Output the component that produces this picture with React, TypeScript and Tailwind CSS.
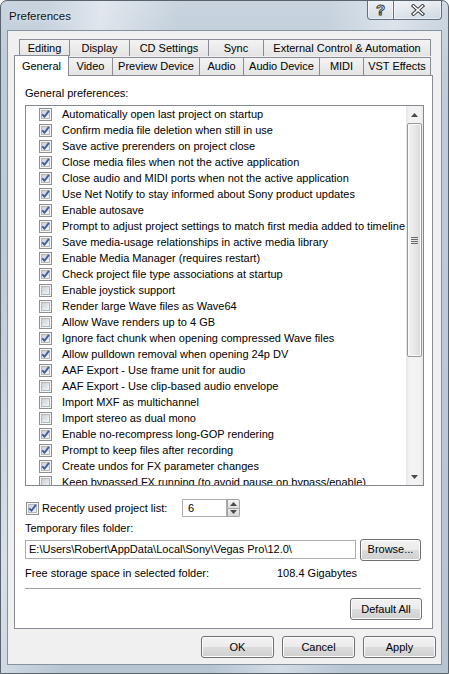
import React from "react";

const items: [string, boolean][] = [
  ["Automatically open last project on startup", true],
  ["Confirm media file deletion when still in use", true],
  ["Save active prerenders on project close", true],
  ["Close media files when not the active application", true],
  ["Close audio and MIDI ports when not the active application", true],
  ["Use Net Notify to stay informed about Sony product updates", true],
  ["Enable autosave", true],
  ["Prompt to adjust project settings to match first media added to timeline", true],
  ["Save media-usage relationships in active media library", true],
  ["Enable Media Manager (requires restart)", true],
  ["Check project file type associations at startup", true],
  ["Enable joystick support", false],
  ["Render large Wave files as Wave64", false],
  ["Allow Wave renders up to 4 GB", false],
  ["Ignore fact chunk when opening compressed Wave files", true],
  ["Allow pulldown removal when opening 24p DV", true],
  ["AAF Export - Use frame unit for audio", true],
  ["AAF Export - Use clip-based audio envelope", false],
  ["Import MXF as multichannel", false],
  ["Import stereo as dual mono", false],
  ["Enable no-recompress long-GOP rendering", true],
  ["Prompt to keep files after recording", true],
  ["Create undos for FX parameter changes", true],
  ["Keep bypassed FX running (to avoid pause on bypass/enable)", false],
];

const backTabs: [string, string][] = [
  ["Editing", "w-[51px] border-l"],
  ["Display", "w-[60px]"],
  ["CD Settings", "w-[79px]"],
  ["Sync", "w-[55px]"],
  ["External Control & Automation", "w-[167px]"],
];

const frontTabs: [string, string][] = [
  ["Video", "w-[44px]"],
  ["Preview Device", "w-[87px]"],
  ["Audio", "w-[44px]"],
  ["Audio Device", "w-[76px]"],
  ["MIDI", "w-[44px]"],
  ["VST Effects", "w-[67px]"],
];

function CheckBox({ checked }: { checked: boolean }) {
  return (
    <svg width="13" height="13" viewBox="0 0 13 13" className="shrink-0">
      <defs>
        <linearGradient id="cbfill" x1="0" y1="0" x2="1" y2="1">
          <stop offset="0" stopColor="#c9ced6" />
          <stop offset="1" stopColor="#f5f6f7" />
        </linearGradient>
      </defs>
      <rect x="0.5" y="0.5" width="12" height="12" fill="#f6f6f6" stroke="#8e8f8f" />
      <rect x="2.5" y="2.5" width="8" height="8" fill="url(#cbfill)" stroke="#b4b8be" />
      {checked && (
        <path d="M3.2 6.3 L5.5 8.7 L9.9 2.9" fill="none" stroke="#3b5a9e" strokeWidth="1.8" />
      )}
    </svg>
  );
}

function Arrow({ up }: { up: boolean }) {
  return (
    <svg width="7" height="4" viewBox="0 0 7 4">
      <path d={up ? "M0 4 L3.5 0 L7 4 Z" : "M0 0 L7 0 L3.5 4 Z"} fill="#4a4a4a" />
    </svg>
  );
}

function Button({ label, w }: { label: string; w: string }) {
  return (
    <div
      className={`${w} h-[22px] flex items-center justify-center rounded-[3px] border border-[#707070] bg-[linear-gradient(to_bottom,#f2f2f2_0%,#ebebeb_50%,#dddddd_50%,#cfcfcf_100%)] shadow-[inset_0_0_0_1px_#fcfcfc] text-black`}
    >
      {label}
    </div>
  );
}

export default function App() {
  return (
    <div className="w-[449px] h-[674px] flex flex-col rounded-t-[7px] border border-[#59636e] bg-[linear-gradient(100deg,transparent_8%,rgba(255,255,255,0.45)_18%,transparent_32%,transparent_58%,rgba(255,255,255,0.4)_70%,transparent_82%),linear-gradient(to_bottom,#c9d4df,#bfccd9_60px,#b7c5d3)] px-[6px] pb-[8px] font-['Liberation_Sans',Arial,sans-serif] text-[11px] text-black overflow-hidden">
      {/* title bar */}
      <div className="h-[29px] flex items-start">
        <div className="pl-[2px] pt-[7px] text-[11.5px] text-[#111] [text-shadow:0_0_6px_rgba(255,255,255,0.9)]">
          Preferences
        </div>
        <div className="ml-auto -mt-px mr-0 flex h-[20px]">
          <div className="w-[27px] h-full flex items-center justify-center rounded-bl-[4px] border border-t-0 border-[#61707f] bg-[linear-gradient(to_bottom,rgba(255,255,255,0.6),rgba(255,255,255,0.25)_50%,rgba(210,220,230,0.35))] shadow-[inset_0_0_0_1px_rgba(255,255,255,0.5)]">
            <span className="text-[15px] font-bold leading-none text-white [-webkit-text-stroke:1px_#3d3d3d]">?</span>
          </div>
          <div className="w-[48px] h-full flex items-center justify-center rounded-br-[4px] border border-t-0 border-l-0 border-[#61707f] bg-[linear-gradient(to_bottom,rgba(255,255,255,0.6),rgba(255,255,255,0.25)_50%,rgba(210,220,230,0.35))] shadow-[inset_0_0_0_1px_rgba(255,255,255,0.5)]">
            <svg width="14" height="12" viewBox="0 0 14 12">
              <path d="M2.5 2 L11.5 10 M11.5 2 L2.5 10" stroke="#3d3d3d" strokeWidth="3.6" strokeLinecap="square" />
              <path d="M2.5 2 L11.5 10 M11.5 2 L2.5 10" stroke="#ffffff" strokeWidth="1.6" strokeLinecap="square" />
            </svg>
          </div>
        </div>
      </div>

      {/* client area */}
      <div className="flex-1 flex flex-col border border-[#8592a0] bg-[#f0f0f0] pt-[8px] pb-[6px]">
        {/* back tab row */}
        <div className="ml-[11px] flex h-[17px]">
          {backTabs.map(([label, cls]) => (
            <div
              key={label}
              className={`${cls} h-full flex items-center justify-center border-t border-r border-[#898c95] bg-[linear-gradient(to_bottom,#f3f3f3,#e4e4e4)] whitespace-nowrap`}
            >
              {label}
            </div>
          ))}
        </div>
        {/* front tab row */}
        <div className="ml-[6px] flex items-end h-[19px]">
          <div className="relative z-10 -mb-px w-[55px] h-[21px] flex justify-center pt-[2px] border-l border-t border-r border-[#898c95] bg-white">
            General
          </div>
          {frontTabs.map(([label, cls]) => (
            <div
              key={label}
              className={`${cls} h-[18px] flex items-center justify-center border-t border-r border-[#898c95] bg-[linear-gradient(to_bottom,#f3f3f3,#e4e4e4)] whitespace-nowrap`}
            >
              {label}
            </div>
          ))}
        </div>

        {/* tab page */}
        <div className="ml-[6px] w-[419px] h-[554px] flex flex-col border border-[#898c95] bg-white pl-[10px] pr-[8px] pt-[10px]">
          <div className="h-[15px] leading-[15px]">General preferences:</div>
          <div className="mt-[4px] h-[381px] flex border border-[#828790] bg-white overflow-hidden">
            <div className="flex-1 flex flex-col overflow-hidden">
              {items.map(([label, checked]) => (
                <div key={label} className="h-[16px] shrink-0 flex items-center gap-[10px] pl-[13px] whitespace-nowrap">
                  <CheckBox checked={checked} />
                  <span>{label}</span>
                </div>
              ))}
            </div>
            <div className="w-[17px] flex flex-col bg-[linear-gradient(to_right,#e6e6e6,#f2f2f2_20%,#f2f2f2_80%,#e9e9e9)]">
              <div className="h-[17px] flex items-center justify-center">
                <Arrow up />
              </div>
              <div className="mx-px h-[234px] flex items-center justify-center rounded-[2px] border border-[#979797] bg-[linear-gradient(to_right,#f3f3f3,#e8e8e8_50%,#d8d8d8)] shadow-[inset_0_0_0_1px_#fbfbfb]">
                <div className="flex flex-col gap-px">
                  <div className="w-[7px] h-px bg-[#6b6b6b]" />
                  <div className="w-[7px] h-px bg-[#6b6b6b]" />
                  <div className="w-[7px] h-px bg-[#6b6b6b]" />
                  <div className="w-[7px] h-px bg-[#6b6b6b]" />
                </div>
              </div>
              <div className="flex-1" />
              <div className="h-[17px] flex items-center justify-center">
                <Arrow up={false} />
              </div>
            </div>
          </div>

          <div className="mt-[12px] h-[20px] flex items-center">
            <div className="ml-px">
              <CheckBox checked />
            </div>
            <span className="ml-[3px] w-[140px]">Recently used project list:</span>
            <div className="w-[45px] h-[18px] flex items-center pl-[5px] border border-[#abadb3] bg-white">6</div>
            <div className="w-[13px] h-[18px] flex flex-col">
              <div className="flex-1 flex items-center justify-center border border-[#a3a3a3] rounded-tr-[2px] bg-[linear-gradient(to_bottom,#f4f4f4,#dedede)]">
                <Arrow up />
              </div>
              <div className="flex-1 flex items-center justify-center border border-t-0 border-[#a3a3a3] rounded-br-[2px] bg-[linear-gradient(to_bottom,#ececec,#d6d6d6)]">
                <Arrow up={false} />
              </div>
            </div>
          </div>

          <div className="mt-[3px] h-[15px] leading-[15px]">Temporary files folder:</div>

          <div className="mt-[3px] h-[21px] flex items-center">
            <div className="w-[331px] h-[19px] flex items-center pl-[3px] border border-[#abadb3] bg-white whitespace-nowrap">
              {"E:\\Users\\Robert\\AppData\\Local\\Sony\\Vegas Pro\\12.0\\"}
            </div>
            <div className="ml-[4px]">
              <Button label="Browse..." w="w-[61px]" />
            </div>
          </div>

          <div className="mt-[6px] h-[15px] leading-[15px] flex">
            <span className="w-[252px]">Free storage space in selected folder:</span>
            <span>108.4 Gigabytes</span>
          </div>

          <div className="mt-[7px] w-[396px] h-px bg-[#a0a0a0]" />

          <div className="mt-[9px] flex justify-end pr-[2px]">
            <Button label="Default All" w="w-[72px]" />
          </div>
        </div>

        {/* dialog buttons */}
        <div className="mt-[7px] flex justify-end gap-[8px] pr-[5px]">
          <Button label="OK" w="w-[73px]" />
          <Button label="Cancel" w="w-[73px]" />
          <Button label="Apply" w="w-[73px]" />
        </div>
      </div>
    </div>
  );
}
